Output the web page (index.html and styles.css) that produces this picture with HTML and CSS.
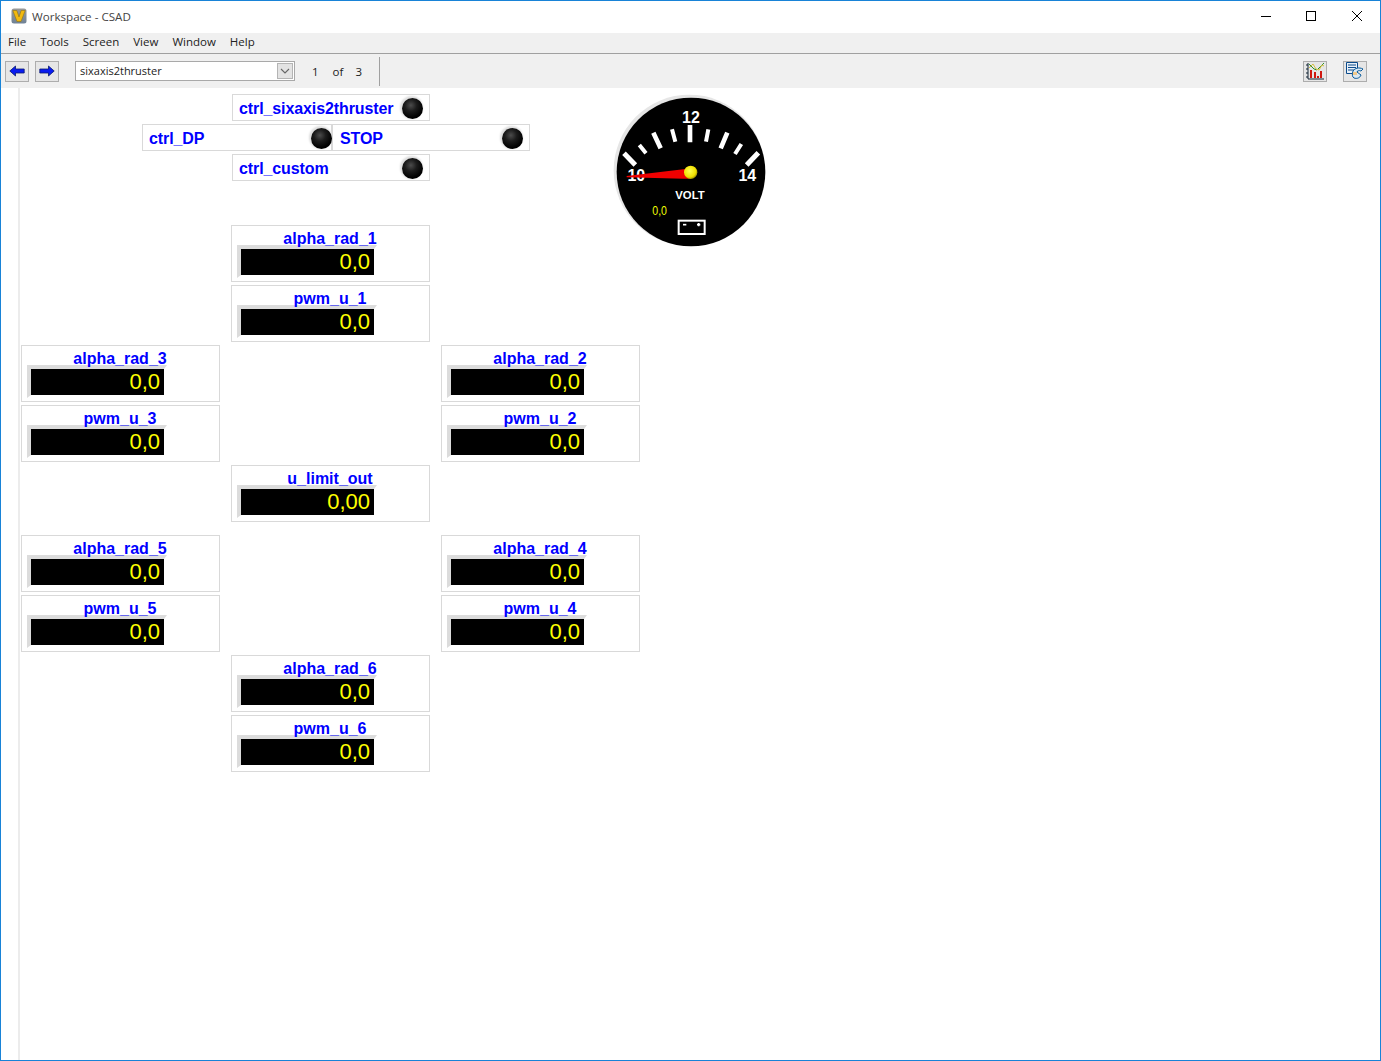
FILE: index.html
```html
<!DOCTYPE html>
<html lang="en">
<head>
<meta charset="utf-8">
<title>Workspace - CSAD</title>
<link rel="stylesheet" href="styles.css">
</head>
<body>
<div class="window">
  <header class="titlebar">
    <svg class="appicon" viewBox="0 0 16 16" width="16" height="16" aria-hidden="true">
      <defs><linearGradient id="appbg" x1="0" y1="0" x2="0" y2="1"><stop offset="0" stop-color="#9a9a98"/><stop offset="1" stop-color="#6f8296"/></linearGradient></defs>
      <rect x="0.5" y="0.5" width="15" height="15" rx="2.5" fill="url(#appbg)"/>
      <path d="M1.800 2.500h4l2.200 6.500 2.200-6.500h4L10 13.500H6z" fill="#f2b90f" stroke="#8a6a00" stroke-width=".5"/>
    </svg>
    <span class="title">Workspace - CSAD</span>
    <div class="winctl">
      <svg viewBox="0 0 10 10" width="10" height="10" aria-hidden="true"><path d="M0 5.500h10" stroke="#000" fill="none"/></svg>
      <svg viewBox="0 0 10 10" width="10" height="10" aria-hidden="true"><rect x=".5" y=".5" width="9" height="9" stroke="#000" fill="none"/></svg>
      <svg viewBox="0 0 10 10" width="10" height="10" aria-hidden="true"><path d="M0 0l10 10M10 0L0 10" stroke="#000" fill="none"/></svg>
    </div>
  </header>
  <nav class="menubar">
    <span>File</span><span>Tools</span><span>Screen</span><span>View</span><span>Window</span><span>Help</span>
  </nav>
  <div class="toolbar">
    <button class="tb-btn" type="button" aria-label="Back">
      <svg viewBox="0 0 16 12" width="16" height="12" aria-hidden="true"><path d="M.8 6L6.500 1v3h8.700v4H6.500v3z" fill="#0a1cf0" stroke="#0a1a70" stroke-width=".8"/></svg>
    </button>
    <button class="tb-btn" type="button" aria-label="Forward">
      <svg viewBox="0 0 16 12" width="16" height="12" aria-hidden="true"><path d="M15.200 6L9.500 1v3H.8v4h8.700v3z" fill="#0a1cf0" stroke="#0a1a70" stroke-width=".8"/></svg>
    </button>
    <div class="combo">
      <span class="combo-text">sixaxis2thruster</span>
      <span class="combo-btn"><svg viewBox="0 0 10 6" width="10" height="6" aria-hidden="true"><path d="M1 1l4 4 4-4" fill="none" stroke="#666" stroke-width="1.1"/></svg></span>
    </div>
    <div class="pager"><span>1</span><span>of</span><span>3</span></div>
    <div class="sep"></div>
    <div class="tb-right">
      <button class="tb-btn" type="button" aria-label="Trend">
        <svg viewBox="0 0 20 18" width="20" height="18" aria-hidden="true">
          <path d="M3 1v16h16M1 3h2M1 7h2M1 11h2M1 15h2" fill="none" stroke="#123" stroke-width="1"/>
          <path d="M4 2l5 5 3 1 4-4 3-3" fill="none" stroke="#2b8f2b"/>
          <path d="M4 6l4-4 3 5 3 1 3-5 2 1" fill="none" stroke="#d6c040"/>
          <path d="M5 8h2v8H5zM9 10h2v6H9zM12 14h2v2h-2zM15 9h2v7h-2z" fill="#d01810"/>
        </svg>
      </button>
      <button class="tb-btn" type="button" aria-label="Report">
        <svg viewBox="0 0 20 18" width="20" height="18" aria-hidden="true">
          <path d="M1.500 .5h11v11h-11z" fill="#e9f0f8" stroke="#0a4a8a"/>
          <path d="M3 3h8M3 5.500h8M3 8h8" stroke="#0a4a8a" stroke-width="1.200"/>
          <path d="M8 9c2-3 6-4 10-2l-2 2c-2-1-4 0-4 1l4 3c-1 3-4 4-7 3-2-1-2-4-1-7z" fill="#d8e8f4" stroke="#0a5a9a"/>
          <path d="M8 10h4v3H8z" fill="#f0c88a"/>
        </svg>
      </button>
    </div>
  </div>
  <main class="canvas">
    <div class="rule"></div>

    <div class="led-box lb-six"><span>ctrl_sixaxis2thruster</span><i class="led"></i></div>
    <div class="led-box lb-dp"><span>ctrl_DP</span><i class="led"></i></div>
    <div class="led-box lb-stop"><span>STOP</span><i class="led"></i></div>
    <div class="led-box lb-custom"><span>ctrl_custom</span><i class="led"></i></div>

    <svg class="gauge" viewBox="0 0 540 495" width="180" height="165" role="img" aria-label="Volt gauge">
      <defs>
        <radialGradient id="hub" cx=".42" cy=".4" r=".65"><stop offset="0" stop-color="#ffff50"/><stop offset=".7" stop-color="#f0e000"/><stop offset="1" stop-color="#8a8000"/></radialGradient>
      </defs>
      <circle cx="268" cy="241" r="227" fill="#e6e6e6"/>
      <circle cx="273" cy="246" r="223" fill="#000"/>
      <g stroke="#fff" fill="none">
        <path stroke-width="15" d="M72 190l34 35M475 188l-35 37"/>
        <path stroke-width="14" d="M160 128l22 47M382 128l-20 47M270 105v52"/>
        <path stroke-width="12" d="M118 165l20 25M216 118l10 37M325 118l-7 37M424 162l-19 30"/>
      </g>
      <g class="g-num">
        <text x="273" y="99" text-anchor="middle">12</text>
        <text x="109" y="273" text-anchor="middle">10</text>
        <text x="442" y="273" text-anchor="middle">14</text>
      </g>
      <text class="g-volt" x="270" y="327" text-anchor="middle">VOLT</text>
      <text class="g-val" x="157" y="375" textLength="44" lengthAdjust="spacingAndGlyphs">0,0</text>
      <rect x="236" y="392" width="78" height="40" fill="none" stroke="#fff" stroke-width="6"/>
      <path d="M249 404h10" stroke="#fff" stroke-width="5"/>
      <path d="M291 404h10M296 399v10" stroke="#fff" stroke-width="5"/>
      <path d="M80 258L250 238l20 0v28l-20 0L80 262z" fill="#f00000"/>
      <circle cx="272" cy="247" r="20" fill="url(#hub)"/>
    </svg>

    <div class="num w-a1"><h3>alpha_rad_1</h3><div class="bezel"><output>0,0</output></div></div>
    <div class="num w-p1"><h3>pwm_u_1</h3><div class="bezel"><output>0,0</output></div></div>
    <div class="num w-a3"><h3>alpha_rad_3</h3><div class="bezel"><output>0,0</output></div></div>
    <div class="num w-p3"><h3>pwm_u_3</h3><div class="bezel"><output>0,0</output></div></div>
    <div class="num w-a2"><h3>alpha_rad_2</h3><div class="bezel"><output>0,0</output></div></div>
    <div class="num w-p2"><h3>pwm_u_2</h3><div class="bezel"><output>0,0</output></div></div>
    <div class="num w-u"><h3>u_limit_out</h3><div class="bezel"><output>0,00</output></div></div>
    <div class="num w-a5"><h3>alpha_rad_5</h3><div class="bezel"><output>0,0</output></div></div>
    <div class="num w-p5"><h3>pwm_u_5</h3><div class="bezel"><output>0,0</output></div></div>
    <div class="num w-a4"><h3>alpha_rad_4</h3><div class="bezel"><output>0,0</output></div></div>
    <div class="num w-p4"><h3>pwm_u_4</h3><div class="bezel"><output>0,0</output></div></div>
    <div class="num w-a6"><h3>alpha_rad_6</h3><div class="bezel"><output>0,0</output></div></div>
    <div class="num w-p6"><h3>pwm_u_6</h3><div class="bezel"><output>0,0</output></div></div>
  </main>
</div>
</body>
</html>
```

FILE: styles.css
```css
* { box-sizing: border-box; }
html, body { margin: 0; height: 100%; background: #fff; overflow: hidden; }
body { font-family: "Open Sans", "Noto Sans", sans-serif; }

.window {
  height: 1061px;
  display: flex;
  flex-direction: column;
  border: 1px solid #1883d7;
}

.titlebar {
  height: 32px;
  flex: none;
  display: flex;
  align-items: center;
  padding: 0 0 0 10px;
  background: #fff;
}
.appicon { display: block; margin-bottom: 2px; }
.title { margin-left: 5px; font-size: 11.6px; color: #444; margin-top: -1px; }
.winctl { margin-left: auto; display: flex; gap: 36px; padding-right: 18px; margin-top: -2px; }
.winctl svg { display: block; }
.winctl svg:first-child { margin-right: -1px; }

.menubar {
  height: 21px;
  flex: none;
  display: flex;
  align-items: center;
  gap: 14px;
  padding: 0 0 4px 7px;
  background: #f0f0f0;
  border-bottom: 1px solid #a0a0a0;
  font-size: 11.5px;
  color: #222;
}

.toolbar {
  height: 34px;
  flex: none;
  display: flex;
  align-items: center;
  padding: 0 13px 0 4px;
  background: #f0f0f0;
  font-size: 11.5px;
  color: #222;
}
.tb-btn {
  width: 24px;
  height: 21px;
  padding: 0;
  display: flex;
  align-items: center;
  justify-content: center;
  background: #e6e6e6;
  border: 1px solid #adadad;
  margin-right: 6px;
}
.tb-btn svg { display: block; }
.combo {
  width: 220px;
  height: 20px;
  margin-left: 10px;
  display: flex;
  align-items: center;
  justify-content: space-between;
  padding: 0 1px 0 4px;
  background: #fff;
  border: 1px solid #a9a9a9;
}
.combo-text { font-size: 11px; color: #222; margin-top: -2px; }
.combo-btn {
  width: 16px;
  height: 16px;
  display: flex;
  align-items: center;
  justify-content: center;
  background: #e3e3e3;
  border: 1px solid #b4b4b4;
}
.combo-btn svg { display: block; }
.pager { display: flex; width: 68px; margin-left: 17px; gap: 14px; }
.pager span:last-child { margin-left: -2px; }
.sep { width: 1px; height: 29px; margin-left: -1px; background: #a0a0a0; }
.tb-right { margin-left: auto; display: flex; gap: 16px; }
.tb-right .tb-btn { margin-right: 0; }

.canvas { flex: 1; position: relative; background: #fff; overflow: hidden; }
.rule { position: absolute; left: 17px; top: 0; bottom: 0; width: 2px; background: #ececec; }

.led-box {
  position: absolute;
  height: 27px;
  width: 198px;
  display: flex;
  align-items: center;
  justify-content: space-between;
  padding: 0 6px 0 6px;
  background: #fff;
  border: 1px solid #d9d9d9;
  font: bold 16px "Liberation Sans", Arial, sans-serif;
  letter-spacing: -0.1px;
  color: #0000ff;
}
.led-box span { margin-top: 3px; }
.lb-six { left: 231px; top: 6px; }
.lb-dp { left: 141px; top: 36px; width: 190px; padding-right: 0; }
.lb-dp .led { margin-right: -1px; }
.lb-stop { left: 331px; top: 36px; padding-left: 7px; }
.lb-custom { left: 231px; top: 66px; }
.led {
  display: block;
  width: 21px;
  height: 21px;
  margin-top: 2px;
  border-radius: 50%;
  background: radial-gradient(circle at 42% 35%, #4c4c4c 0, #1c1c1c 32%, #000 68%);
  box-shadow: -1px -1px 2px 1px #dedede;
}

.gauge { position: absolute; left: 599px; top: 2px; display: block; }
.g-num { font: bold 48px "Liberation Sans", Arial, sans-serif; fill: #fff; }
.g-volt { font: bold 34px "Liberation Sans", Arial, sans-serif; fill: #fff; }
.g-val { font: 36px "Liberation Sans", Arial, sans-serif; fill: #f0ff00; }

.num {
  position: absolute;
  width: 199px;
  height: 57px;
  padding: 0 0 0 5px;
  background: #fff;
  border: 1px solid #d9d9d9;
}
.num h3 {
  margin: 0 0 0 -5px;
  height: 19px;
  padding-right: 1px;
  text-align: center;
  font: bold 16px/25px "Liberation Sans", Arial, sans-serif;
  color: #0000ff;
}
.bezel {
  width: 140px;
  height: 33px;
  border-style: solid;
  border-width: 4px 3px 3px 4px;
  border-color: #dcdcdc transparent transparent #dcdcdc;
}
.bezel output {
  display: block;
  height: 26px;
  background: #000;
  color: #ffff00;
  padding-right: 4px;
  text-align: right;
  font: 22px/26px "Liberation Sans", Arial, sans-serif;
}
.w-a1 { left: 230px; top: 137px; }
.w-p1 { left: 230px; top: 197px; }
.w-a3 { left: 20px; top: 257px; }
.w-p3 { left: 20px; top: 317px; }
.w-a2 { left: 440px; top: 257px; }
.w-p2 { left: 440px; top: 317px; }
.w-u { left: 230px; top: 377px; }
.w-a5 { left: 20px; top: 447px; }
.w-p5 { left: 20px; top: 507px; }
.w-a4 { left: 440px; top: 447px; }
.w-p4 { left: 440px; top: 507px; }
.w-a6 { left: 230px; top: 567px; }
.w-p6 { left: 230px; top: 627px; }
```
